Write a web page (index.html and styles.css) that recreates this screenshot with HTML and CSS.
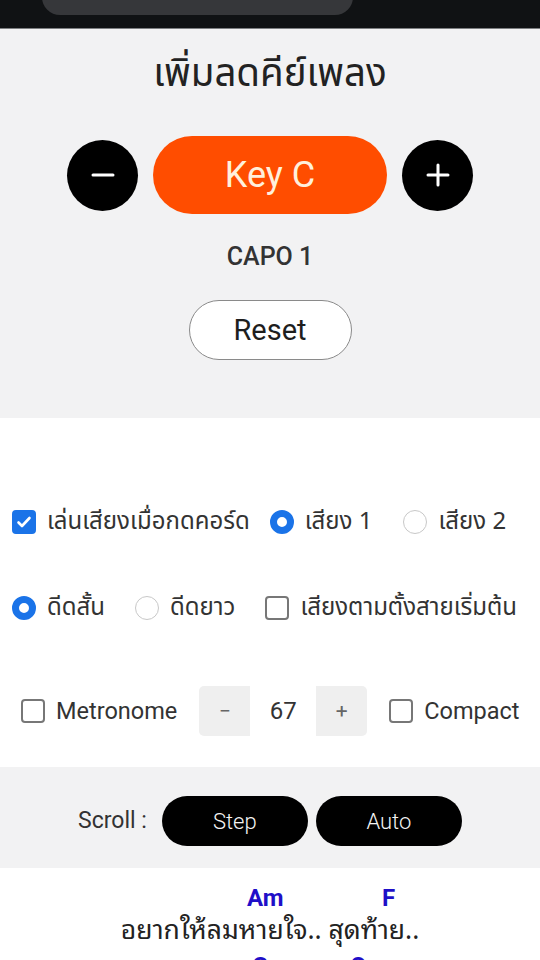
FILE: index.html
```html
<!DOCTYPE html>
<html lang="th">
<head>
<meta charset="utf-8">
<link rel="stylesheet" href="styles.css">
</head>
<body>
<div class="topbar"><div class="notch"></div></div>

<section class="keypanel">
  <h1 class="title">เพิ่มลดคีย์เพลง</h1>
  <div class="keyrow">
    <button class="circle-btn" aria-label="minus">
      <svg width="26" height="26" viewBox="0 0 26 26"><path d="M3 13h20" stroke="#fff" stroke-width="3" stroke-linecap="round"/></svg>
    </button>
    <button class="key-btn">Key C</button>
    <button class="circle-btn" aria-label="plus">
      <svg width="26" height="26" viewBox="0 0 26 26"><path d="M3 13h20M13 3v20" stroke="#fff" stroke-width="3" stroke-linecap="round"/></svg>
    </button>
  </div>
  <div class="capo">CAPO 1</div>
  <button class="reset-btn">Reset</button>
</section>

<section class="options">
  <div class="optrow row1">
    <label class="opt"><span class="cb checked"><svg width="18" height="18" viewBox="0 0 18 18"><path d="M3.5 9.5l3.5 3.5 7.5-8" fill="none" stroke="#fff" stroke-width="2.6" stroke-linecap="round" stroke-linejoin="round"/></svg></span><span class="thai">เล่นเสียงเมื่อกดคอร์ด</span></label>
    <label class="opt"><span class="rb checked"></span><span class="thai">เสียง 1</span></label>
    <label class="opt wide"><span class="rb"></span><span class="thai">เสียง 2</span></label>
  </div>
  <div class="optrow row2">
    <label class="opt"><span class="rb checked"></span><span class="thai">ดีดสั้น</span></label>
    <label class="opt"><span class="rb"></span><span class="thai">ดีดยาว</span></label>
    <label class="opt"><span class="cb"></span><span class="thai">เสียงตามตั้งสายเริ่มต้น</span></label>
  </div>
  <div class="optrow row3">
    <label class="opt"><span class="cb"></span><span class="latin">Metronome</span></label>
    <div class="stepper">
      <span class="step-side">−</span>
      <span class="step-val">67</span>
      <span class="step-side">+</span>
    </div>
    <label class="opt"><span class="cb"></span><span class="latin">Compact</span></label>
  </div>
</section>

<section class="scrollbar">
  <span class="scroll-label">Scroll :</span>
  <button class="pill">Step</button>
  <button class="pill">Auto</button>
</section>

<section class="lyrics">
  <div class="chords c1"><span class="chord am">Am</span><span class="chord f">F</span></div>
  <div class="lyric">อยากให้ลมหายใจ.. สุดท้าย..</div>
  <div class="chords c2"><span class="chord g1">G</span><span class="chord g2">C</span></div>
</section>
</body>
</html>
```

FILE: styles.css
```css
* { box-sizing: border-box; }
html, body { margin: 0; padding: 0; }
body {
  width: 540px;
  height: 960px;
  overflow: hidden;
  background: #ffffff;
  font-family: Roboto, "Noto Sans", "Noto Sans Thai", sans-serif;
  color: #222;
}
button { font-family: inherit; border: none; cursor: pointer; padding: 0; }

.topbar {
  height: 29px;
  background: #101214;
  border-bottom: 1px solid #7d7f82;
  position: relative;
  overflow: hidden;
}
.notch {
  position: absolute;
  left: 42px;
  top: -20px;
  width: 311px;
  height: 35px;
  background: #36373a;
  border-radius: 0 0 18px 18px;
}

.keypanel {
  background: #f2f2f3;
  height: 389px;
  padding-top: 21px;
  display: flex;
  flex-direction: column;
  align-items: center;
}
.title {
  margin: 0;
  font-family: "Noto Sans Thai", "Noto Sans", sans-serif;
  font-weight: 400;
  font-size: 38.5px;
  line-height: 48px;
  color: #222;
}
.keyrow {
  margin-top: 38px;
  display: flex;
  align-items: center;
  gap: 15px;
}
.circle-btn {
  width: 71px;
  height: 71px;
  border-radius: 50%;
  background: #000;
  display: flex;
  align-items: center;
  justify-content: center;
}
.key-btn {
  width: 234px;
  height: 78px;
  border-radius: 39px;
  background: #ff4d00;
  color: #fff0dc;
  font-size: 36px;
  font-family: Roboto, sans-serif;
}
.capo {
  margin-top: 28px;
  font-size: 25px;
  line-height: 30px;
  font-weight: 500;
  color: #333;
}
.reset-btn {
  margin-top: 28px;
  width: 163px;
  height: 60px;
  border-radius: 30px;
  background: #fff;
  border: 1px solid #8a8a8a;
  font-size: 29px;
  color: #1e1e1e;
}

.options {
  height: 349px;
  padding-top: 89px;
  background: #fff;
}
.optrow {
  display: flex;
  align-items: center;
}
.row1 { height: 30px; padding-left: 12px; gap: 20px; }
.row2 { height: 30px; padding-left: 12px; gap: 30px; margin-top: 56px; }
.row3 { height: 50px; padding-left: 21px; gap: 22px; margin-top: 63px; }
.row1 .wide { margin-left: 11px; }

.opt {
  display: flex;
  align-items: center;
  gap: 11px;
  font-size: 24px;
  color: #333;
  white-space: nowrap;
}
.thai { font-family: "Noto Sans Thai", "Noto Sans", sans-serif; }
.latin { font-family: Roboto, sans-serif; font-size: 23.5px; }

.cb {
  width: 24px;
  height: 24px;
  border-radius: 4px;
  border: 2px solid #777;
  background: #fff;
  display: flex;
  align-items: center;
  justify-content: center;
  flex: none;
}
.cb.checked { background: #1a73e8; border-color: #1a73e8; }
.rb {
  width: 24px;
  height: 24px;
  border-radius: 50%;
  border: 1px solid #c8c8c8;
  background: #fff;
  flex: none;
}
.rb.checked { border: 7px solid #1a73e8; }

.stepper {
  display: flex;
  height: 50px;
  width: 168px;
  border-radius: 5px;
  overflow: hidden;
  background: #efefef;
  font-size: 24px;
  color: #333;
}
.step-side {
  width: 51px;
  display: flex;
  align-items: center;
  justify-content: center;
  color: #666;
  font-size: 21px;
}
.step-val {
  width: 66px;
  background: #fff;
  display: flex;
  align-items: center;
  justify-content: center;
}

.scrollbar {
  background: #f2f2f3;
  height: 101px;
  display: flex;
  align-items: flex-start;
  padding-top: 29px;
  padding-left: 78px;
}
.scroll-label {
  font-size: 23px;
  line-height: 50px;
  color: #333;
  margin-right: 15px;
}
.pill {
  width: 146px;
  height: 50px;
  border-radius: 25px;
  background: #000;
  color: #f4f4f4;
  font-size: 22px;
  font-weight: 300;
  margin-right: 8px;
}

.lyrics {
  background: #fff;
  padding-top: 17px;
}
.chords {
  position: relative;
  height: 26px;
  font-family: Roboto, sans-serif;
  font-weight: 700;
  font-size: 24px;
  color: #1f0fc8;
}
.chord { position: absolute; top: 0; line-height: 26px; }
.am { left: 247px; }
.f { left: 382px; }
.g1 { left: 252px; }
.g2 { left: 350px; }
.lyric {
  text-align: center;
  font-family: "Noto Sans Thai Looped", "Noto Serif Thai", "Noto Sans Thai", "Noto Sans", sans-serif;
  font-size: 26.5px;
  line-height: 28px;
  color: #222;
  margin-top: 2px;
}
.c2 { margin-top: 12px; }
```
